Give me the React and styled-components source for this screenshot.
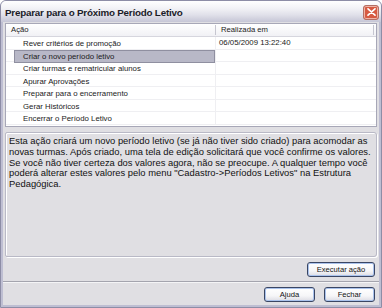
import React from "react";
import styled, { createGlobalStyle } from "styled-components";

const Global = createGlobalStyle`
  html, body { margin: 0; padding: 0; background: #ffffff; }
  body { width: 382px; height: 308px; overflow: hidden; font-family: "Liberation Sans", Arial, sans-serif; }
`;

const Window = styled.div`
  width: 382px;
  height: 308px;
  box-sizing: border-box;
  display: flex;
  flex-direction: column;
  background: #bebed2;
  border: 1px solid #8d8da6;
  border-radius: 6px 6px 0 0;
  overflow: hidden;
`;

const TitleBar = styled.div`
  height: 21px;
  flex: none;
  display: flex;
  align-items: center;
  justify-content: space-between;
  padding: 0 2px 0 4px;
  background: linear-gradient(#ffffff 0%, #f2f2f6 35%, #e1e1ea 65%, #c6c6d6 100%);
`;

const Title = styled.span`
  font-family: "Liberation Sans", Arial, sans-serif;
  font-weight: bold;
  font-size: 9.8px;
  letter-spacing: -0.2px;
  color: #1c1c28;
  padding-top: 1px;
`;

const CloseButton = styled.div`
  width: 16px;
  height: 15px;
  box-sizing: border-box;
  border: 1px solid #b37066;
  border-radius: 3px;
  background-color: #d65a42;
  box-shadow: inset 0 0 0 1px #efb4a6;
  display: flex;
  align-items: center;
  justify-content: center;
  margin-top: 1px;
`;

const Client = styled.div`
  flex: 1;
  margin: 0 2px 2px 2px;
  background: #e0dfe3;
  display: flex;
  flex-direction: column;
  padding: 1px 2px 0 2px;
`;

const List = styled.div`
  height: 104px;
  flex: none;
  box-sizing: border-box;
  border: 1px solid #a7a7b7;
  background: #ffffff;
  display: flex;
  flex-direction: column;
  overflow: hidden;
`;

const HeaderRow = styled.div`
  height: 12px;
  flex: none;
  display: grid;
  grid-template-columns: 210px 158px 1fr;
  background: linear-gradient(#ffffff, #f1f1f5);
  border-bottom: 1px solid #d6d6de;
`;

const HeaderCell = styled.div`
  font-size: 7.7px;
  color: #222;
  padding-left: ${(p) => p.$pad}px;
  border-right: ${(p) => (p.$sep ? "1px solid #c6c6d0" : "none")};
  margin: 1px 0 1px 0;
  line-height: 10px;
`;

const Row = styled.div`
  height: 12.5px;
  flex: none;
  box-sizing: border-box;
  display: grid;
  grid-template-columns: 210px 1fr;
  border-bottom: 1px solid #efeff2;
`;

const NameCell = styled.div`
  padding-left: 8px;
  border-right: 1px solid #efeff2;
  display: flex;
`;

const NameText = styled.div`
  flex: 1;
  box-sizing: border-box;
  font-size: 7.8px;
  color: #1a1a1a;
  padding-left: 8px;
  line-height: 11px;
  background: ${(p) => (p.$selected ? "#b8b8c7" : "transparent")};
  border: 1px solid ${(p) => (p.$selected ? "#8f8fa0" : "transparent")};
  margin-bottom: -1px;
  white-space: nowrap;
`;

const DateCell = styled.div`
  font-size: 7.8px;
  color: #1a1a1a;
  padding-left: 3px;
  line-height: 12px;
  white-space: nowrap;
`;

const Description = styled.div`
  margin-top: 5px;
  height: 125px;
  flex: none;
  box-sizing: border-box;
  border: 1px solid #b9b9c6;
  border-radius: 2px 3px 3px 2px;
  box-shadow: inset 1px 1px 0 #ffffff, 1px 1px 0 #ffffff;
  padding: 3px 3px 0 3px;
  font-size: 9.4px;
  line-height: 10.8px;
  color: #111;
  white-space: nowrap;
`;

const ActionRow = styled.div`
  display: flex;
  justify-content: flex-end;
  padding-right: 2px;
  margin-top: 5px;
`;

const Separator = styled.div`
  margin: 4px -2px 0 -2px;
  height: 1px;
  background: #a4a4ae;
  box-shadow: 0 1px 0 #f4f4f6;
`;

const Footer = styled.div`
  display: flex;
  justify-content: flex-end;
  gap: 9px;
  padding-right: 2px;
  margin-top: 5px;
`;

const Button = styled.button`
  width: ${(p) => p.$w}px;
  height: 15px;
  box-sizing: border-box;
  padding: 0;
  font-family: "Liberation Sans", Arial, sans-serif;
  font-size: 7.6px;
  color: #111;
  border: 1px solid #3a4664;
  border-radius: 3px;
  background: linear-gradient(#ffffff 0%, #f6f6f8 60%, #dcdce4 100%);
  box-shadow: inset 0 0 0 1px #aac2ec;
  line-height: 13px;
`;

const rows = [
  { name: "Rever critérios de promoção", date: "06/05/2009 13:22:40" },
  { name: "Criar o novo período letivo", date: "", selected: true },
  { name: "Criar turmas e rematricular alunos", date: "" },
  { name: "Apurar Aprovações", date: "" },
  { name: "Preparar para o encerramento", date: "" },
  { name: "Gerar Históricos", date: "" },
  { name: "Encerrar o Período Letivo", date: "" },
];

export default function App() {
  return (
    <>
      <Global />
      <Window>
        <TitleBar>
          <Title>Preparar para o Próximo Período Letivo</Title>
          <CloseButton>
            <svg width="9" height="8" viewBox="0 0 9 8">
              <path d="M1 0.8 L8 7.2 M8 0.8 L1 7.2" stroke="#ffffff" strokeWidth="1.6" strokeLinecap="round" />
            </svg>
          </CloseButton>
        </TitleBar>
        <Client>
          <List>
            <HeaderRow>
              <HeaderCell $pad={5} $sep>Ação</HeaderCell>
              <HeaderCell $pad={5} $sep>Realizada em</HeaderCell>
              <HeaderCell $pad={0} />
            </HeaderRow>
            {rows.map((r) => (
              <Row key={r.name}>
                <NameCell>
                  <NameText $selected={r.selected}>{r.name}</NameText>
                </NameCell>
                <DateCell>{r.date}</DateCell>
              </Row>
            ))}
          </List>
          <Description>
            Esta ação criará um novo período letivo (se já não tiver sido criado) para acomodar as
            <br />
            novas turmas. Após criado, uma tela de edição solicitará que você confirme os valores.
            <br />
            Se você não tiver certeza dos valores agora, não se preocupe. A qualquer tempo você
            <br />
            poderá alterar estes valores pelo menu "Cadastro-&gt;Períodos Letivos" na Estrutura
            <br />
            Pedagógica.
          </Description>
          <ActionRow>
            <Button $w={68}>Executar ação</Button>
          </ActionRow>
          <Separator />
          <Footer>
            <Button $w={51}>Ajuda</Button>
            <Button $w={51}>Fechar</Button>
          </Footer>
        </Client>
      </Window>
    </>
  );
}
